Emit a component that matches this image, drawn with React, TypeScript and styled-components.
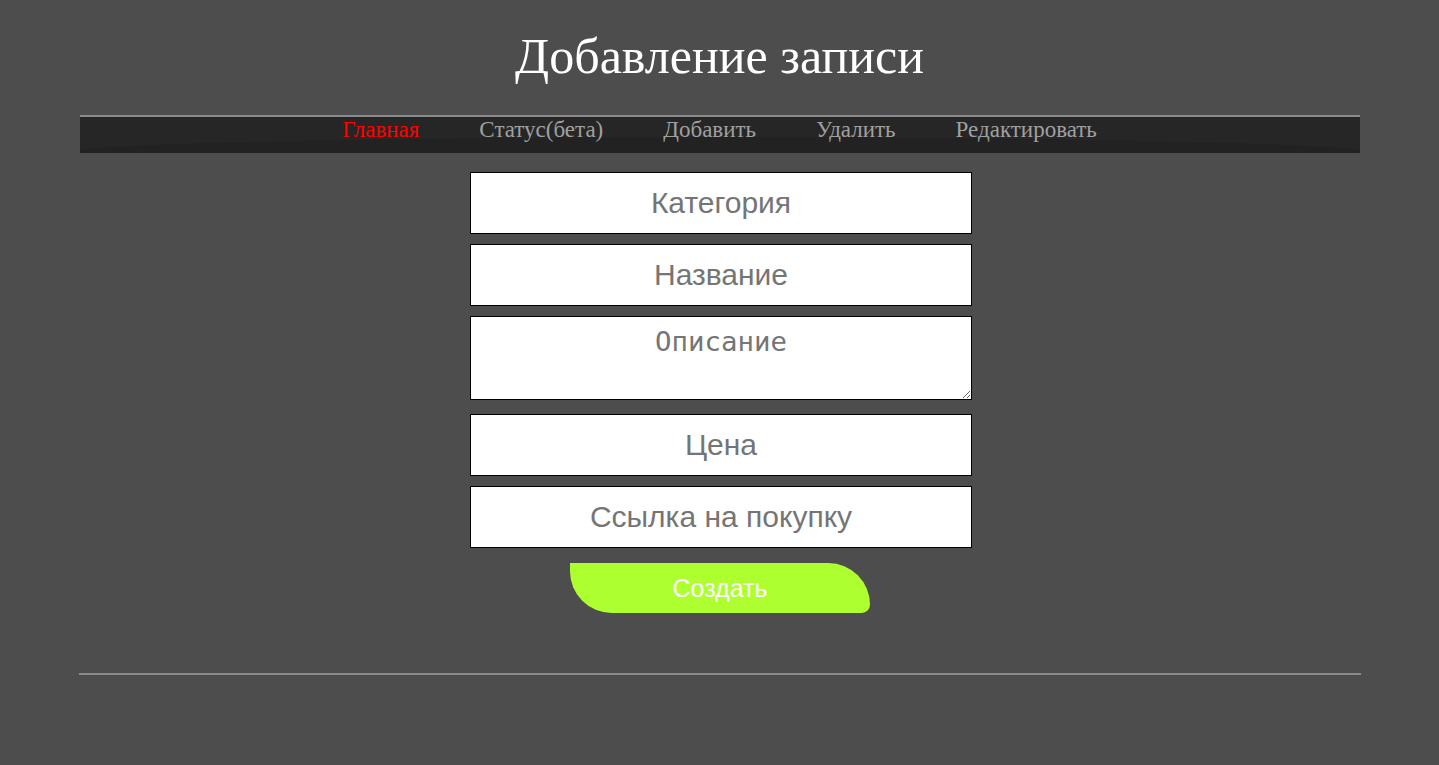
import React from "react";
import styled, { createGlobalStyle } from "styled-components";

const Global = createGlobalStyle`
  html, body { margin: 0; padding: 0; background: #4d4d4d; }
  body { font-family: "Liberation Serif", "Times New Roman", serif; }
`;

const Page = styled.div`
  width: 1280px;
  margin: 0 auto;
  display: flex;
  flex-direction: column;
  align-items: stretch;
`;

const Title = styled.h1`
  margin: 0;
  padding-top: 27px;
  height: 115px;
  box-sizing: border-box;
  text-align: center;
  font-family: "Liberation Serif", "Times New Roman", serif;
  font-weight: normal;
  font-size: 50px;
  line-height: 58px;
  color: #ffffff;
`;

const NavBar = styled.nav`
  border-top: 2px solid #8a8a8a;
  height: 36px;
  background:
    radial-gradient(ellipse 52% 45% at 50% 100%, #222222 98%, rgba(34,34,34,0) 100%),
    #262626;
  display: flex;
  justify-content: center;
  align-items: flex-start;
`;

const NavLink = styled.a<{ $active?: boolean }>`
  font-family: "Liberation Serif", "Times New Roman", serif;
  font-size: 23px;
  line-height: 26px;
  padding: 0 30px;
  text-decoration: none;
  color: ${(p) => (p.$active ? "#ff0000" : "#a0a0a0")};
  cursor: pointer;
`;

const Form = styled.form`
  display: flex;
  flex-direction: column;
  align-items: center;
  padding: 19px 0 0 3px;
`;

const Field = styled.input`
  box-sizing: border-box;
  width: 502px;
  height: 62px;
  margin-bottom: 10px;
  border: 1px solid #000;
  background: #fff;
  text-align: center;
  font-family: "Liberation Sans", Arial, sans-serif;
  font-size: 30px;
  color: #333;
  outline: none;
  &::placeholder { color: #757575; }
`;

const Area = styled.textarea`
  box-sizing: border-box;
  width: 502px;
  height: 84px;
  margin-bottom: 14px;
  border: 1px solid #000;
  background: #fff;
  text-align: center;
  font-family: "DejaVu Sans Mono", "Liberation Mono", monospace;
  font-size: 27.4px;
  padding: 9px 4px 4px;
  color: #333;
  outline: none;
  &::placeholder { color: #757575; }
`;

const Submit = styled.button`
  margin: 5px 2px 0 0;
  width: 300px;
  height: 50px;
  border: none;
  border-radius: 0 50px 10px 50px;
  background: #adff2f;
  color: #ffffff;
  font-family: "Liberation Sans", Arial, sans-serif;
  font-size: 25px;
  cursor: pointer;
`;

const Footer = styled.hr`
  margin: 60px 0 0 -1px;
  width: 1282px;
  border: none;
  border-top: 2px solid #8a8a8a;
  height: 0;
`;

export default function App() {
  return (
    <>
      <Global />
      <Page>
        <Title>Добавление записи</Title>
        <NavBar>
          <NavLink $active>Главная</NavLink>
          <NavLink>Статус(бета)</NavLink>
          <NavLink>Добавить</NavLink>
          <NavLink>Удалить</NavLink>
          <NavLink>Редактировать</NavLink>
        </NavBar>
        <Form onSubmit={(e) => e.preventDefault()}>
          <Field placeholder="Категория" />
          <Field placeholder="Название" />
          <Area placeholder="Описание" />
          <Field placeholder="Цена" />
          <Field placeholder="Ссылка на покупку" />
          <Submit type="submit">Создать</Submit>
        </Form>
        <Footer />
      </Page>
    </>
  );
}
